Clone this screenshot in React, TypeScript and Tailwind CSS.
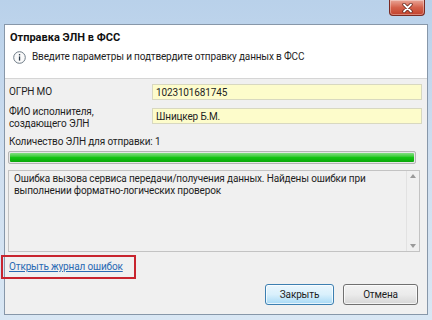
import React from 'react';

const font = { fontFamily: 'Roboto, "Noto Sans", sans-serif' };

const InfoIcon = () => (
  <svg width="13" height="13" viewBox="0 0 13 13" className="shrink-0">
    <circle cx="6.5" cy="6.5" r="5.8" fill="#fafafa" stroke="#6d7a86" strokeWidth="1" />
    <rect x="5.9" y="5.4" width="1.3" height="4.2" fill="#2b3a4a" />
    <rect x="5.9" y="3.1" width="1.3" height="1.3" fill="#2b3a4a" />
  </svg>
);

const CloseButton = () => (
  <div className="w-[36px] h-[16px] rounded-b-[4px] border border-t-0 border-[#7a2a22] bg-gradient-to-b from-[#e9a597] via-[#d4614b] to-[#c2402b] flex items-center justify-center shadow-[inset_0_0_0_1px_rgba(255,255,255,0.35)]">
    <svg width="11" height="10" viewBox="0 0 11 10">
      <path d="M2 1.5 L9 8.5 M9 1.5 L2 8.5" stroke="#5a1d14" strokeWidth="3.2" strokeLinecap="round" />
      <path d="M2 1.5 L9 8.5 M9 1.5 L2 8.5" stroke="#ffffff" strokeWidth="1.8" strokeLinecap="round" />
    </svg>
  </div>
);

export default function App() {
  return (
    <div
      className="w-[432px] h-[320px] overflow-hidden flex flex-col px-[4px] pb-[5px] bg-gradient-to-b from-[#b9d1ea] via-[#cfdff0] to-[#d9e7f4] text-[#1e1e1e]"
      style={font}
    >
      {/* title bar */}
      <div className="h-[24px] flex justify-end items-start pr-[3px]">
        <CloseButton />
      </div>

      {/* client area */}
      <div className="flex-1 flex flex-col bg-[#f0f0f0] border border-[#8797a9] text-[10px] tracking-[-0.15px]">
        {/* header */}
        <div className="h-[54px] bg-white border-b border-[#d5d5d5] px-[5px] pt-[5px] flex flex-col">
          <div className="text-[11px] font-bold leading-[16px] tracking-normal text-[#111]">Отправка ЭЛН в ФСС</div>
          <div className="mt-[4px] flex items-center gap-[6px] leading-[14px] pl-[3px]">
            <InfoIcon />
            <span>Введите параметры и подтвердите отправку данных в ФСС</span>
          </div>
        </div>

        {/* body */}
        <div className="flex-1 flex flex-col pl-[3px] pr-[5px]">
          <div className="mt-[5px] flex items-center">
            <div className="w-[144px] pl-[1px] leading-[12px]">ОГРН МО</div>
            <div className="flex-1 h-[16px] bg-[#fdfccb] border border-[#d8d8c0] flex items-center pl-[3px]">
              1023101681745
            </div>
          </div>

          <div className="mt-[6px] flex items-start">
            <div className="w-[144px] pl-[1px] leading-[12px]">
              ФИО исполнителя,
              <br />
              создающего ЭЛН
            </div>
            <div className="flex-1 h-[16px] mt-[2px] bg-[#fdfccb] border border-[#d8d8c0] flex items-center pl-[3px]">
              Шницкер Б.М.
            </div>
          </div>

          <div className="mt-[6px] pl-[1px] leading-[12px]">Количество ЭЛН для отправки: 1</div>

          <div className="mt-[3px] w-[408px] h-[13px] border border-[#b4b4b4] rounded-[2px] bg-[#e6e6e6] p-[1px]">
            <div className="h-full w-full rounded-[1px] bg-gradient-to-b from-[#7ee07e] via-[#13c513] to-[#0aa70a]" />
          </div>

          <div className="mt-[6px] w-[412px] h-[82px] border border-[#c3c3c3] bg-[#f0f0f0] flex">
            <div className="flex-1 pl-[5px] pt-[2px] leading-[12px]">
              Ошибка вызова сервиса передачи/получения данных. Найдены ошибки при
              <br />
              выполнении форматно-логических проверок
            </div>
            <div className="w-[13px] flex flex-col items-center justify-between py-[3px] border-l border-[#e2e2e2]">
              <svg width="6" height="4" viewBox="0 0 6 4">
                <path d="M0 4 L3 0 L6 4 Z" fill="#9a9a9a" />
              </svg>
              <svg width="6" height="4" viewBox="0 0 6 4">
                <path d="M0 0 L6 0 L3 4 Z" fill="#9a9a9a" />
              </svg>
            </div>
          </div>

          <div className="mt-[7px] relative self-start">
            <div className="absolute left-[-7px] top-[-4px] w-[135px] h-[24px] border-2 border-[#c8242e]" />
            <a className="pl-[1px] leading-[12px] text-[#2a6ab3] underline">Открыть журнал ошибок</a>
          </div>

          <div className="flex-1 flex items-end justify-end gap-[9px] pr-[4px] pb-[9px]">
            <button className="w-[69px] h-[21px] rounded-[3px] border border-[#3c7fb1] bg-gradient-to-b from-[#eaf6fd] via-[#d9f0fc] to-[#a7d9f5] shadow-[inset_0_0_0_1px_rgba(255,255,255,0.7)]">
              Закрыть
            </button>
            <button className="w-[75px] h-[21px] rounded-[3px] border border-[#707070] bg-gradient-to-b from-[#f2f2f2] via-[#ebebeb] to-[#d6d6d6] shadow-[inset_0_0_0_1px_rgba(255,255,255,0.7)]">
              Отмена
            </button>
          </div>
        </div>
      </div>
    </div>
  );
}
